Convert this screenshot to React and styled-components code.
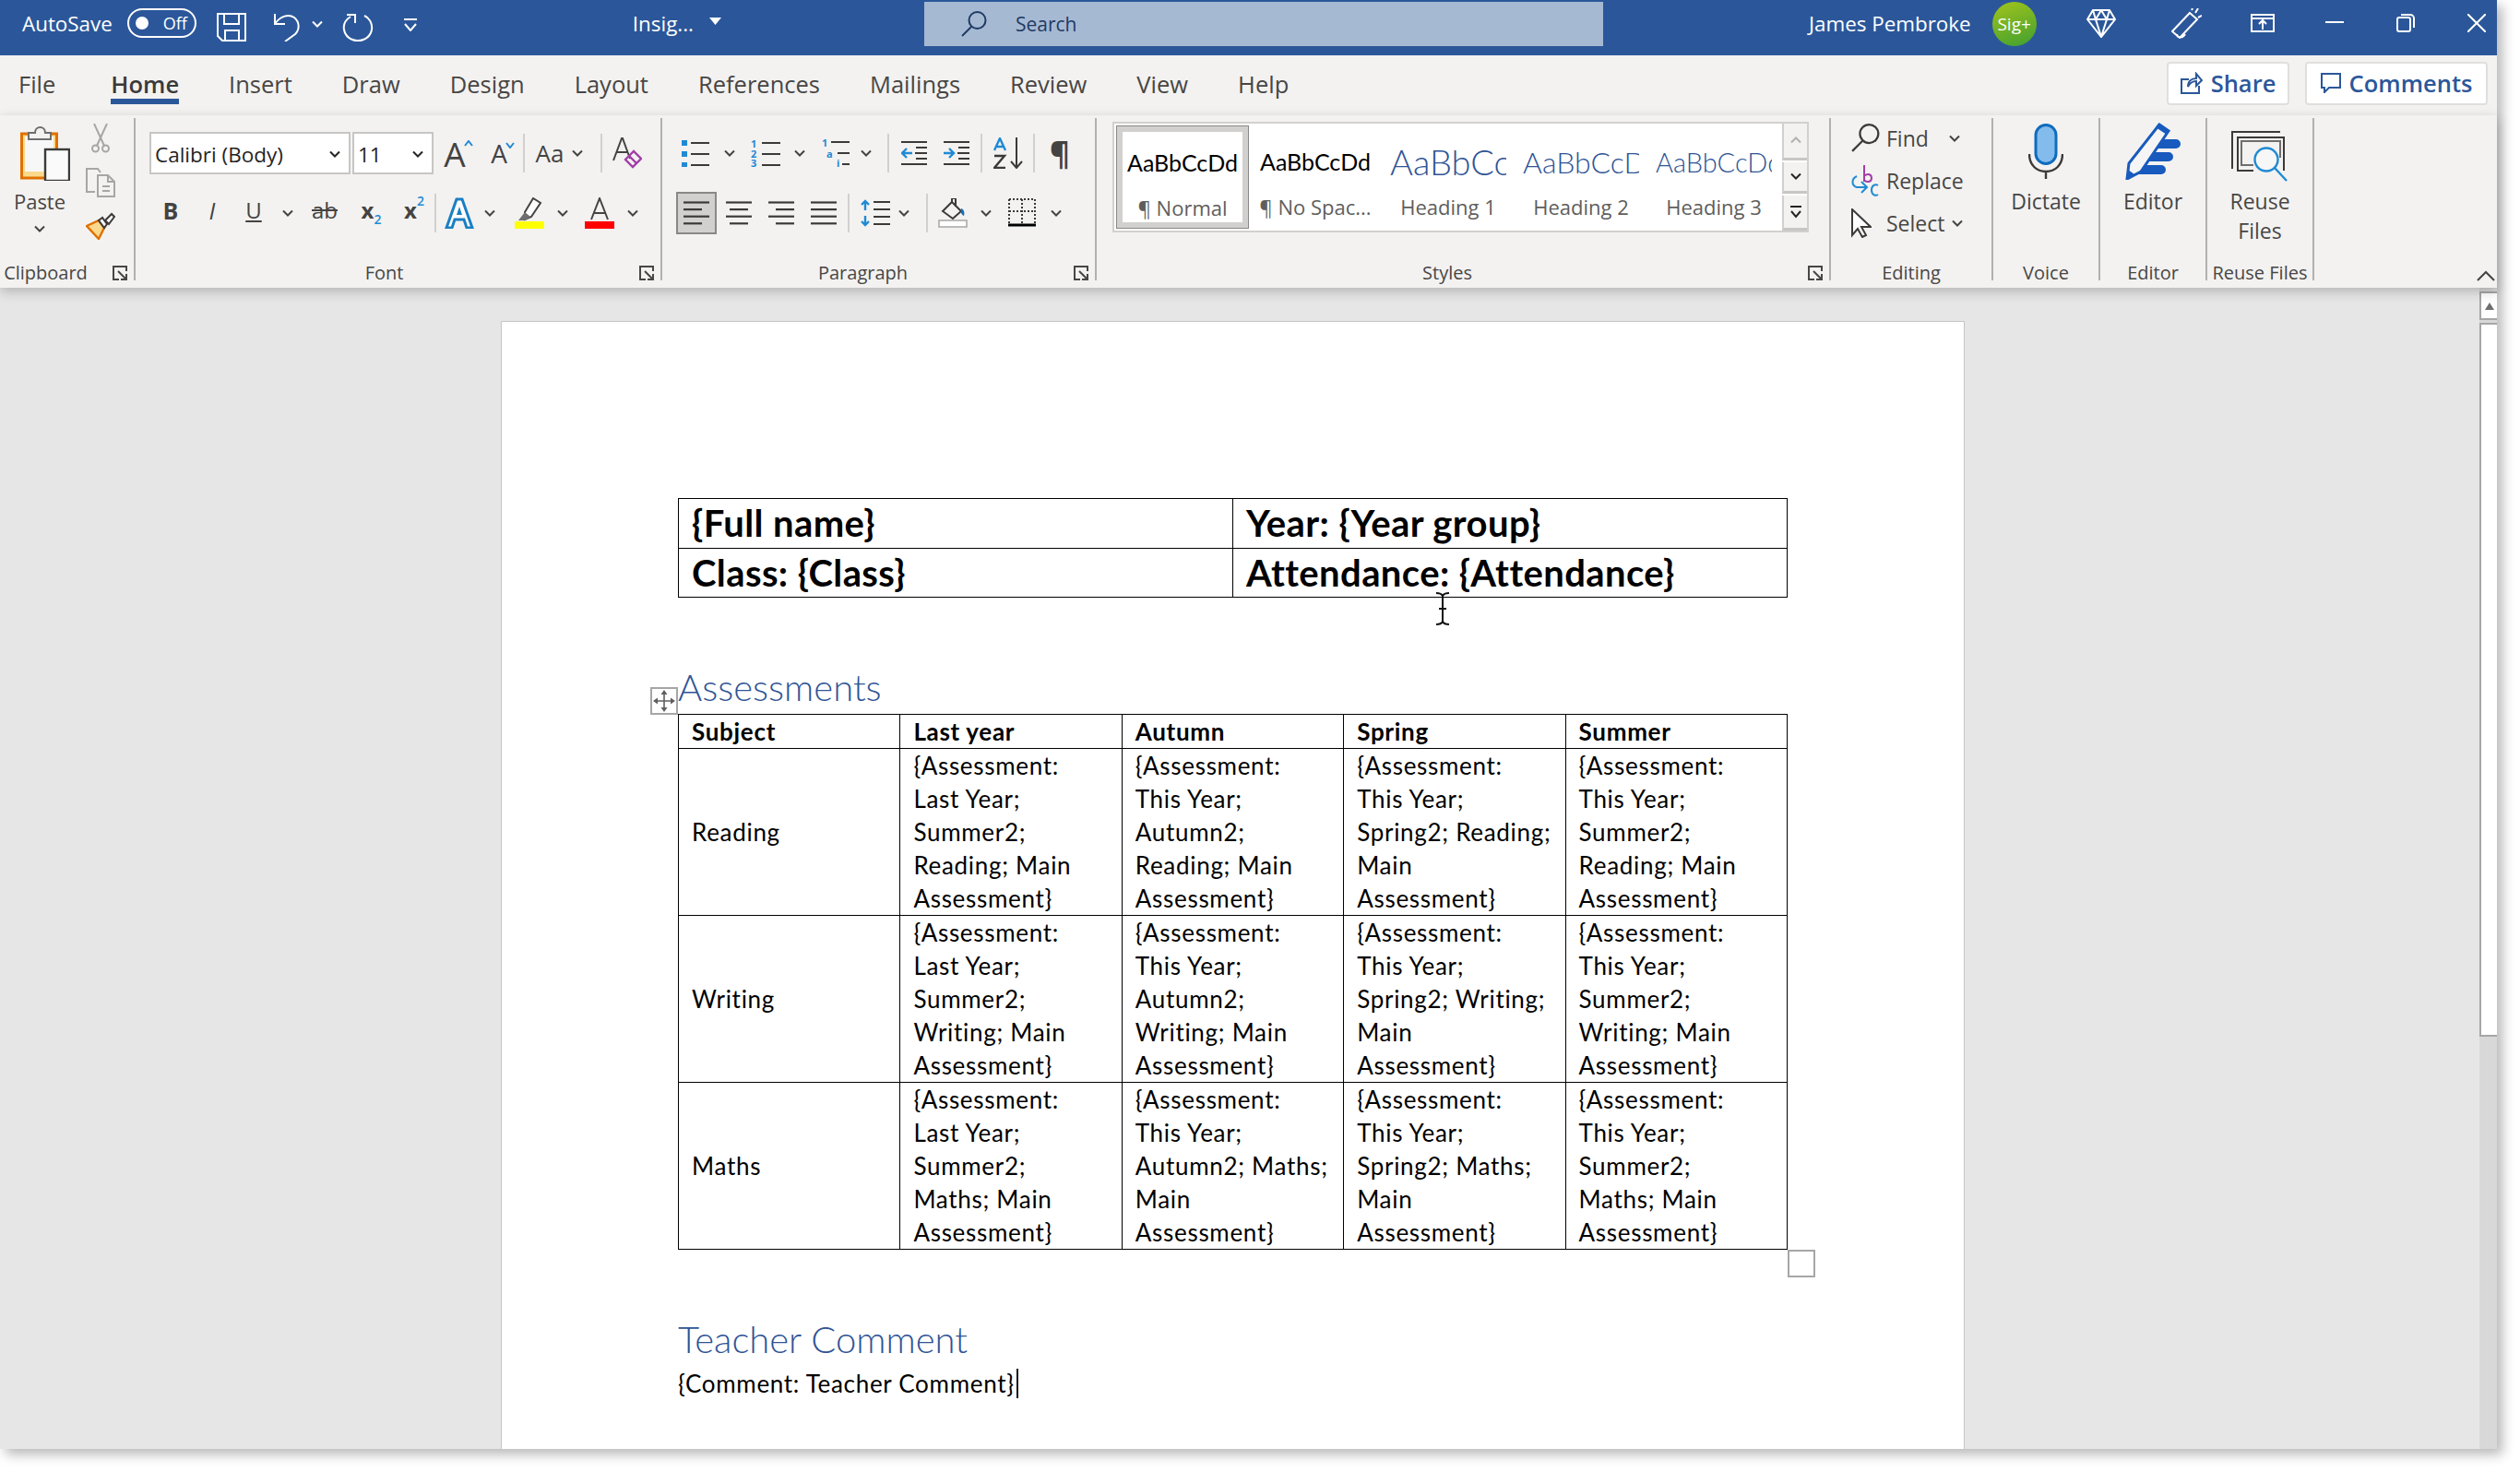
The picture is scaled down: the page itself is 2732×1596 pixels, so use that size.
import React from 'react';
import styled, { createGlobalStyle } from 'styled-components';

const UI = '"Open Sans", "Noto Sans", sans-serif';
const DOC = 'Lato, "Noto Sans", sans-serif';
const INK = '#444342';
const BLUE = '#1f8ad4';
const NAVY = '#2b579a';

const GlobalStyle = createGlobalStyle`
  html, body { margin: 0; padding: 0; background: #fff; }
  * { box-sizing: border-box; }
  body { width: 2732px; height: 1596px; overflow: hidden; font-family: ${UI}; }
`;

const Window = styled.div`
  width: 2707px;
  height: 1571px;
  display: flex;
  flex-direction: column;
  box-shadow: 6px 6px 12px rgba(0, 0, 0, 0.28);
`;

/* title bar */
const TitleBar = styled.header`
  height: 60px;
  flex: none;
  display: flex;
  align-items: center;
  background: ${NAVY};
  color: #fff;
  padding-left: 24px;
  font-size: 22.4px;
`;
const Toggle = styled.div`
  width: 75px;
  height: 32px;
  margin-left: 16px;
  margin-top: -10px;
  border: 2px solid #fff;
  border-radius: 16px;
  display: flex;
  align-items: center;
  padding-left: 7px;
  font-size: 18px;
  &::before {
    content: '';
    width: 14px;
    height: 14px;
    border-radius: 50%;
    background: #fff;
    margin-right: 16px;
  }
`;
const TitleText = styled.span`
  margin-left: ${(p) => p.$ml || 0}px;
  margin-top: -10px;
  white-space: nowrap;
`;
const SearchBox = styled.div`
  width: 736px;
  height: 48px;
  margin-left: ${(p) => p.$ml}px;
  margin-top: -8px;
  background: #a6b9d3;
  color: #1f3a63;
  display: flex;
  align-items: center;
  padding-left: 40px;
  gap: 31px;
  font-size: 21px;
`;
const Avatar = styled.div`
  width: 48px;
  height: 48px;
  margin-left: 23px;
  margin-top: -8px;
  border-radius: 50%;
  background: linear-gradient(160deg, #a3c41c, #3f9f30);
  font-size: 19px;
  display: flex;
  align-items: center;
  justify-content: center;
`;
const Cell = styled.div`
  flex: none;
  width: ${(p) => p.$w}px;
  height: ${(p) => p.$h || 46}px;
  margin-left: ${(p) => p.$ml || 0}px;
  margin-top: ${(p) => p.$mt || 0}px;
  display: flex;
  align-items: center;
  justify-content: center;
  color: ${INK};
`;

/* tabs */
const TabRow = styled.nav`
  height: 65px;
  flex: none;
  display: flex;
  align-items: center;
  background: #f3f2f1;
  padding-left: 20px;
`;
const Tab = styled.div`
  position: relative;
  margin-right: ${(p) => p.$mr}px;
  font-size: 25.5px;
  line-height: 34px;
  margin-top: -4px;
  color: ${(p) => (p.$active ? '#3b3a39' : '#484644')};
  font-weight: ${(p) => (p.$active ? 600 : 400)};
  ${(p) =>
    p.$active &&
    `&::after {
      content: '';
      position: absolute;
      left: 0;
      right: 0;
      bottom: -5px;
      height: 6px;
      background: ${NAVY};
    }`}
`;
const TabActions = styled.div`
  margin-left: auto;
  margin-right: 10px;
  margin-top: -5px;
  display: flex;
  gap: 17px;
`;
const ActionButton = styled.div`
  width: ${(p) => p.$w}px;
  height: 47px;
  display: flex;
  align-items: center;
  justify-content: center;
  gap: 9px;
  background: #fff;
  border: 2px solid #e1dfdd;
  border-radius: 4px;
  color: ${NAVY};
  font-size: 25.5px;
  font-weight: 600;
`;

/* ribbon */
const Ribbon = styled.section`
  height: 187px;
  flex: none;
  position: relative;
  z-index: 2;
  display: flex;
  padding-top: 3px;
  background: #f3f2f1;
  box-shadow: 0 4px 12px rgba(0, 0, 0, 0.22);
`;
const Group = styled.div`
  position: relative;
  flex: none;
  width: ${(p) => p.$w}px;
  height: 176px;
  border-right: 2px solid #b3b0ad;
  display: flex;
  flex-direction: column;
`;
const GroupBody = styled.div`
  flex: 1;
  min-height: 0;
  display: flex;
  flex-direction: ${(p) => p.$dir || 'row'};
  padding-left: ${(p) => p.$pl || 0}px;
  padding-top: ${(p) => p.$pt || 0}px;
  gap: ${(p) => p.$gap || 0}px;
`;
const GroupFoot = styled.div`
  height: 16px;
  flex: none;
  display: flex;
  justify-content: center;
  padding-right: ${(p) => p.$pr || 0}px;
  font-size: 20px;
  line-height: 16px;
  color: #484644;
  white-space: nowrap;
`;
const Launcher = styled.svg`
  position: absolute;
  right: 7px;
  bottom: 0;
`;
const ToolRow = styled.div`
  display: flex;
  align-items: center;
  height: 46px;
`;
const FontSelect = styled.div`
  flex: none;
  width: ${(p) => p.$w}px;
  height: 46px;
  margin-right: 2px;
  background: #fff;
  border: 2px solid #c8c6c4;
  display: flex;
  align-items: center;
  justify-content: space-between;
  padding: 2px 9px 0 4px;
  font-size: 22.5px;
  color: #252423;
`;
const RowSep = styled.span`
  width: 2px;
  height: 42px;
  background: #d2d0ce;
`;
const ActiveAlign = styled(Cell)`
  background: #d2d0ce;
  border: 2px solid #8a8886;
`;

const PasteColumn = styled.div`
  width: 86px;
  flex: none;
  display: flex;
  flex-direction: column;
  align-items: center;
  padding-top: 8px;
  font-size: 22px;
  color: #484644;
  line-height: 30px;
  & > span {
    margin-top: 7px;
    margin-bottom: 11px;
  }
  & > svg:first-child {
    margin-left: 12px;
  }
`;
const SmallTools = styled.div`
  display: flex;
  flex-direction: column;
  align-items: center;
  gap: 16px;
  padding-top: 6px;
  width: 45px;
`;

const Gallery = styled.div`
  width: 755px;
  height: 120px;
  margin-left: 17px;
  margin-top: 4px;
  display: flex;
  background: #fff;
  border: 2px solid #d2d0ce;
`;
const StyleItem = styled.div`
  flex: none;
  width: 144px;
  height: 112px;
  margin-top: 2px;
  margin-left: ${(p) => (p.$selected ? 2 : 0)}px;
  overflow: hidden;
  display: flex;
  flex-direction: column;
  align-items: center;
  background: #fff;
  ${(p) => p.$selected && 'border: 1px solid #8a8886; outline: 0; box-shadow: inset 0 0 0 6px #d2d0ce;'}
`;
const StyleSample = styled.div`
  height: 73px;
  width: 126px;
  padding-top: 5px;
  display: flex;
  align-items: center;
  justify-content: ${(p) => (p.$clip ? 'flex-start' : 'center')};
  overflow: hidden;
  white-space: nowrap;
  font-family: ${DOC};
  font-size: ${(p) => p.$size}px;
  font-weight: ${(p) => (p.$clip ? 300 : 400)};
  color: ${(p) => (p.$clip ? '#2f5496' : '#000')};
`;
const StyleName = styled.div`
  font-size: 22px;
  line-height: 30px;
  color: #605e5c;
  white-space: nowrap;
`;
const GalleryScroll = styled.div`
  margin-left: auto;
  width: 27px;
  display: flex;
  flex-direction: column;
  gap: 2px;
`;
const ScrollStep = styled.div`
  flex: ${(p) => p.$grow};
  display: flex;
  align-items: center;
  justify-content: center;
  background: #f3f2f1;
  border-left: 2px solid #d2d0ce;
  border-bottom: 3px solid #c8c6c4;
`;
const EditRow = styled.div`
  height: 46px;
  padding-bottom: 3px;
  display: flex;
  align-items: center;
  font-size: 23px;
  color: #484644;
`;
const EditIcon = styled.div`
  width: 38px;
  flex: none;
  display: flex;
  justify-content: flex-start;
`;
const BigButton = styled.div`
  flex: 1;
  display: flex;
  flex-direction: column;
  align-items: center;
  padding-top: ${(p) => p.$pt}px;
  font-size: 23px;
  line-height: 32px;
  color: #484644;
  text-align: center;
`;
const BigIcon = styled.div`
  height: ${(p) => p.$h}px;
  flex: none;
`;
const Collapse = styled.svg`
  position: absolute;
  right: 2px;
  bottom: 7px;
`;

/* document */
const DocArea = styled.main`
  flex: 1;
  min-height: 0;
  display: flex;
  overflow: hidden;
`;
const Canvas = styled.div`
  flex: 1;
  background: #e6e6e6;
  padding: 36px 0 0 543px;
  overflow: hidden;
`;
const Page = styled.article`
  position: relative;
  width: 1587px;
  height: 1300px;
  padding: 191px 0 0 191px;
  background: #fff;
  border: 1px solid #c8c6c4;
  color: #000;
  font-family: ${DOC};
`;
const InfoTable = styled.table`
  width: 1203px;
  table-layout: fixed;
  border-collapse: collapse;
  font-size: 40px;
  letter-spacing: 0.4px;
  font-weight: 700;
  td {
    height: 53.5px;
    padding: 0 14px;
    border: 1px solid #000;
    line-height: 50px;
  }
`;
const Heading = styled.h2`
  margin: ${(p) => p.$mt}px 0 0;
  height: 50px;
  font-size: 40px;
  line-height: 42px;
  font-weight: 300;
  white-space: nowrap;
  color: #2f5496;
`;
const Assessments = styled.table`
  width: 1203px;
  table-layout: fixed;
  border-collapse: collapse;
  font-size: 26px;
  letter-spacing: 0.7px;
  line-height: 36px;
  td, th {
    padding: 0 14px;
    border: 1px solid #000;
    text-align: left;
    vertical-align: middle;
    white-space: nowrap;
  }
`;
const MoveHandle = styled.div`
  position: absolute;
  left: 161px;
  top: 396px;
  width: 30px;
  height: 30px;
  border: 2px solid #a6a6a6;
  background: #fff;
  display: flex;
  align-items: center;
  justify-content: center;
`;
const ResizeHandle = styled.div`
  position: absolute;
  left: 1394px;
  top: 1006px;
  width: 30px;
  height: 30px;
  border: 2px solid #a6a6a6;
`;
const BeamCursor = styled.svg`
  position: absolute;
  left: 1011px;
  top: 293px;
`;
const CommentLine = styled.p`
  margin: 1px 0 0;
  font-size: 26px;
  letter-spacing: 0.7px;
  line-height: 36px;
  display: flex;
  align-items: center;
  &::after {
    content: '';
    width: 2px;
    height: 32px;
    margin-left: 2px;
    background: #111;
  }
`;
const ScrollBar = styled.aside`
  width: 19px;
  flex: none;
  background: #d8d8d8;
  display: flex;
  flex-direction: column;
  padding-top: 4px;
  gap: 3px;
`;
const ScrollUp = styled.div`
  height: 31px;
  flex: none;
  background: #fff;
  border: 2px solid #a6a6a6;
  border-right: 0;
  display: flex;
  align-items: center;
  justify-content: center;
`;
const ScrollThumb = styled.div`
  height: 774px;
  flex: none;
  background: #fff;
  border: 2px solid #a6a6a6;
  border-right: 0;
`;

/* drawings */
const Chev = ({ c = INK, w = 12 }) => (
  <svg width={w} height="8" viewBox="0 0 12 8" fill="none" stroke={c} strokeWidth="2"><path d="M1 1.5l5 5 5-5" /></svg>
);
const LauncherIcon = () => (
  <Launcher width="16" height="16" viewBox="0 0 16 16" fill="none" stroke="#484644" strokeWidth="2">
    <path d="M15 6V1H1v14h6M6 6l9 9M15 9v6H9" />
  </Launcher>
);
const Lines = ({ rows, w = 28, h = 26 }) => (
  <svg width={w} height={h} viewBox={`0 0 ${w} ${h}`} stroke="#3b3a39" strokeWidth="2.2">
    {rows.map((r, i) => <path key={i} d={`M${r[0]} ${1.5 + i * 7.6}H${r[1]}`} />)}
  </svg>
);
const Save = () => (
  <svg width="32" height="31" viewBox="0 0 32 31" fill="none" stroke="#fff" strokeWidth="2"><path d="M1 1h30v29H6l-5-5zM8 1v11h16V1M9 30V19h15v11" /></svg>
);
const Undo = () => (
  <svg width="30" height="32" viewBox="0 0 30 32" fill="none" stroke="#fff" strokeWidth="2"><path d="M2 2v11h11M2 13C8 4 17 2 23 6c6 5 6 13 1 18L13 32" /></svg>
);
const Redo = () => (
  <svg width="34" height="32" viewBox="0 0 34 32" fill="none" stroke="#fff" strokeWidth="2"><path d="M9 5C3 9 1 14 2 19c1 7 7 12 15 12s14-5 15-12c1-7-3-13-8-15M5 3h9v9" /></svg>
);
const Qat = () => (
  <svg width="14" height="14" viewBox="0 0 14 14" fill="none" stroke="#fff" strokeWidth="2"><path d="M0 1h14M1 6l6 7 6-7" /></svg>
);
const Lens = ({ s = 28, c = '#1f3a63', w = 2 }) => (
  <svg width={s} height={s} viewBox="0 0 28 28" fill="none" stroke={c} strokeWidth={w}><circle cx="17.5" cy="10" r="9" /><path d="M11 17L1 27" /></svg>
);
const Diamond = () => (
  <svg width="32" height="31" viewBox="0 0 32 31" fill="none" stroke="#fff" strokeWidth="2"><path d="M7 1h18l6 10-15 19L1 11zM1 11h30M10 11l6 19 6-19M7 1l3 10 6-10 6 10 3-10" /></svg>
);
const Megaphone = () => (
  <svg width="33" height="33" viewBox="0 0 33 33" fill="none" stroke="#fff" strokeWidth="2"><path d="M20 5l8 7L9 32l-8-7zM6 28c0 4 6 5 9 0M22 2l1-2M26 5l3-5M29 10l4-2" /></svg>
);
const RibbonDisplay = () => (
  <svg width="26" height="20" viewBox="0 0 26 20" fill="none" stroke="#fff" strokeWidth="2"><path d="M1 1h24v18H1zM1 5h24M13 17V8M9 11l4-4 4 4" /></svg>
);
const Minimize = () => (
  <svg width="20" height="2" viewBox="0 0 20 2"><path d="M0 1h20" stroke="#fff" strokeWidth="2" /></svg>
);
const Restore = () => (
  <svg width="20" height="20" viewBox="0 0 20 20" fill="none" stroke="#fff" strokeWidth="2"><rect x="1" y="4" width="14" height="15" rx="2" /><path d="M5 1h10a4 4 0 0 1 4 4v10" /></svg>
);
const CloseX = () => (
  <svg width="20" height="20" viewBox="0 0 20 20" stroke="#fff" strokeWidth="2"><path d="M0 0l20 20M20 0L0 20" /></svg>
);
const ShareIcon = () => (
  <svg width="24" height="24" viewBox="0 0 24 24" fill="none" stroke={NAVY} strokeWidth="2"><path d="M9 8H1v15h19v-8M8 16c0-6 4-9 9-9V2l6 7-6 6v-5c-4 0-7 2-9 6z" /></svg>
);
const CommentIcon = () => (
  <svg width="22" height="22" viewBox="0 0 22 22" fill="none" stroke={NAVY} strokeWidth="2"><path d="M1 1h20v15H9l-5 5v-5H1z" /></svg>
);
const Paste = () => (
  <svg width="54" height="60" viewBox="0 0 54 60">
    <rect x="1.5" y="9" width="38" height="48" fill="#fbd98c" stroke="#e07000" strokeWidth="3" />
    <rect x="5" y="12" width="31" height="38" fill="#f7f7f7" />
    <path d="M9 15V8h7c0-8 11-8 11 0h6v7z" fill="#f3f2f1" stroke="#6e6e6e" strokeWidth="2" />
    <rect x="27" y="26" width="26" height="34" fill="#fafafa" stroke="#3b3a39" strokeWidth="2.4" />
  </svg>
);
const Cut = () => (
  <svg width="20" height="32" viewBox="0 0 20 32" fill="none" stroke="#a6a6a6" strokeWidth="2"><path d="M3 0l11 24M17 0L6 24" /><circle cx="4.5" cy="27" r="3.5" /><circle cx="15.5" cy="27" r="3.5" /></svg>
);
const Copy = () => (
  <svg width="32" height="32" viewBox="0 0 32 32" fill="none" stroke="#a6a6a6" strokeWidth="2"><path d="M10 26H1V1h12l3 4" /><path d="M13 8h11l7 7v16H13zM24 8v7h7M18 20h8M18 25h8" /></svg>
);
const Painter = () => (
  <svg width="32" height="30" viewBox="0 0 32 30">
    <path d="M1 15l13-6 6 8-6 12z" fill="#fbd98c" stroke="#e07000" strokeWidth="2.4" />
    <path d="M14 9l4-3 5 7-3 4z" fill="#f7f7f7" stroke="#3b3a39" strokeWidth="2" />
    <path d="M21 9l7-7 3 3-6 8z" fill="#f7f7f7" stroke="#3b3a39" strokeWidth="2" />
  </svg>
);
const Glyph = styled.span`
  font-size: ${(p) => p.$size}px;
  font-weight: ${(p) => p.$weight || 400};
  font-style: ${(p) => (p.$italic ? 'italic' : 'normal')};
  color: ${INK};
  line-height: 1;
  display: inline-block;
  position: relative;
  margin-left: ${(p) => p.$ml || 0}px;
  text-decoration: ${(p) => p.$decor || 'none'};
`;
const Script = styled.span`
  position: absolute;
  left: 100%;
  top: ${(p) => p.$top}px;
  font-size: 14px;
  line-height: 16px;
  font-weight: 600;
  color: ${BLUE};
`;
const Caret = styled.svg`
  position: absolute;
  left: 92%;
  top: ${(p) => p.$top}px;
`;
const CaretUp = () => (
  <Caret $top={4} width="10" height="7" viewBox="0 0 10 7" fill="none" stroke={BLUE} strokeWidth="2"><path d="M1 6l4-5 4 5" /></Caret>
);
const CaretDown = () => (
  <Caret $top={2} width="10" height="7" viewBox="0 0 10 7" fill="none" stroke={BLUE} strokeWidth="2"><path d="M1 1l4 5 4-5" /></Caret>
);
const Eraser = () => (
  <svg width="32" height="34" viewBox="0 0 32 34" fill="none">
    <path d="M1 25L10 1h1l8 22M5 16h11" stroke={INK} strokeWidth="2" />
    <path d="M14 24l9-9 8 8-9 9z" stroke="#a33ea8" strokeWidth="2.4" />
    <path d="M18 20l8 8" stroke="#a33ea8" strokeWidth="2.4" />
  </svg>
);
const TextEffect = () => (
  <svg width="32" height="34" viewBox="0 0 32 34" fill="none">
    <path d="M2 33L13 2h6l11 31h-6l-3-9H11l-3 9z" fill="#fff" stroke="#1a7fc4" strokeWidth="3" />
    <path d="M13 19l3-9 3 9z" fill="#1a7fc4" />
  </svg>
);
const Highlighter = () => (
  <svg width="32" height="34" viewBox="0 0 32 34" fill="none">
    <path d="M11 16L20 1l8 5-10 15-7 3z" fill="#fff" stroke={INK} strokeWidth="2" />
    <path d="M4 25l7-9 6 5-5 4z" fill="#6e6e6e" />
    <rect x="0" y="26" width="32" height="8" fill="#ffff00" />
  </svg>
);
const FontColor = () => (
  <svg width="32" height="34" viewBox="0 0 32 34" fill="none">
    <path d="M7 24L16 1l9 23M10 17h12" stroke={INK} strokeWidth="2" />
    <rect x="0" y="26" width="32" height="8" fill="#f00" />
  </svg>
);
const Bullets = () => (
  <svg width="30" height="30" viewBox="0 0 30 30">
    {[0, 12, 24].map((y) => <rect key={y} y={y + 1} width="6" height="6" fill={BLUE} />)}
    {[0, 12, 24].map((y) => <path key={y} d={`M10 ${y + 4}h20`} stroke="#3b3a39" strokeWidth="2" />)}
  </svg>
);
const NumberIcon = styled.svg`
  overflow: visible;
`;
const SmallNo = styled.text`
  font-family: ${UI};
  font-size: 11px;
  font-weight: 700;
  fill: ${BLUE};
`;
const Numbered = () => (
  <NumberIcon width="32" height="30" viewBox="0 0 32 30">
    <SmallNo x="0" y="9">1</SmallNo><SmallNo x="0" y="20">2</SmallNo><SmallNo x="0" y="30">3</SmallNo>
    {[0, 12, 24].map((y) => <path key={y} d={`M12 ${y + 4}h20`} stroke="#3b3a39" strokeWidth="2" />)}
  </NumberIcon>
);
const Multi = () => (
  <NumberIcon width="30" height="32" viewBox="0 0 30 32">
    <SmallNo x="0" y="9">1</SmallNo><SmallNo x="5" y="21">a</SmallNo><SmallNo x="16" y="31">i</SmallNo>
    <path d="M10 4h20M17 16h13M22 28h8" stroke="#3b3a39" strokeWidth="2" />
  </NumberIcon>
);
const Indent = ({ flip }) => (
  <svg width="28" height="28" viewBox="0 0 28 28" fill="none">
    <path d="M0 2h28M15 14h13M0 26h28M16 8h12M16 20h12" stroke="#3b3a39" strokeWidth="2" />
    <path d={flip ? 'M0 14h11M6 9l5 5-5 5' : 'M1 14h11M6 9l-5 5 5 5'} stroke={BLUE} strokeWidth="2.4" />
  </svg>
);
const Sort = () => (
  <svg width="32" height="34" viewBox="0 0 32 34" fill="none">
    <path d="M1 14L7 1l6 13M3 10h8" stroke={BLUE} strokeWidth="2.4" />
    <path d="M1 20h11L1 33h12" stroke="#3b3a39" strokeWidth="2.4" />
    <path d="M25 0v32M19 26l6 7 6-7" stroke="#3b3a39" strokeWidth="2" />
  </svg>
);
const LineSpacing = () => (
  <svg width="32" height="30" viewBox="0 0 32 30" fill="none">
    <path d="M5 2v10M1 6l4-4 4 4M5 18v10M1 24l4 4 4-4" stroke={BLUE} strokeWidth="2.4" />
    <path d="M14 3h18M14 11h18M14 19h18M14 27h18" stroke="#3b3a39" strokeWidth="2.2" />
  </svg>
);
const Shading = () => (
  <svg width="32" height="32" viewBox="0 0 32 32" fill="none">
    <path d="M5 14L15 4l10 10-9 8zM15 4V0h4v9" stroke="#3b3a39" strokeWidth="2" />
    <path d="M25 11c3 1 4 4 3 8-3-1-4-5-3-8z" fill="#1a6fb5" />
    <rect x="1" y="24" width="30" height="7" fill="#fff" stroke="#a6a6a6" strokeWidth="1.5" />
  </svg>
);
const Borders = () => (
  <svg width="30" height="32" viewBox="0 0 30 32" fill="none">
    <path d="M1 1h28v26M1 1v26M15 1v26M1 14h28" stroke="#3b3a39" strokeWidth="2" strokeDasharray="2 2" />
    <path d="M0 29h30" stroke="#000" strokeWidth="3" />
  </svg>
);
const Replace = () => (
  <svg width="30" height="34" viewBox="0 0 30 34" fill="none">
    <path d="M14 0v18M14 12c2-3 8-3 8 2s-6 5-8 2" stroke="#a33ea8" strokeWidth="2" />
    <path d="M6 12C0 15 0 22 6 24h10M11 18l6 6-6 6" stroke={BLUE} strokeWidth="2" />
    <path d="M29 22c-3-2-7 0-7 5s4 7 7 5" stroke={BLUE} strokeWidth="2" />
  </svg>
);
const Pointer = () => (
  <svg width="22" height="32" viewBox="0 0 22 32" fill="#fff" stroke="#3b3a39" strokeWidth="2"><path d="M1 1v28l6-7 5 9 4-2-5-9h10z" /></svg>
);
const Mic = () => (
  <svg width="38" height="60" viewBox="0 0 38 60" fill="none">
    <rect x="8" y="1.5" width="22" height="42" rx="11" fill="#83bcec" stroke="#0f6cbd" strokeWidth="3" />
    <path d="M1 33c0 12 8 19 18 19s18-7 18-19M19 52v8" stroke="#3b3a39" strokeWidth="2.4" />
  </svg>
);
const EditorIcon = () => (
  <svg width="62" height="62" viewBox="0 0 62 62">
    <path d="M34 18h22a5 5 0 0 1 0 10H28zM26 32h22a5 5 0 0 1 0 10H20zM16 46h24a5 5 0 0 1 0 10H12z" fill="#185abd" />
    <path d="M38 2l10 7-30 44-15 8 2-17z" fill="#f5f5f5" stroke="#185abd" strokeWidth="3" />
    <path d="M37 1l12 8-3 4-12-8zM2 61l2-10 7 5z" fill="#185abd" />
  </svg>
);
const ReuseIcon = () => (
  <svg width="62" height="55" viewBox="0 0 62 55" fill="none">
    <path d="M1 41V1h52" stroke="#3b3a39" strokeWidth="2" />
    <path d="M24 43H7V7h50v36" stroke="#3b3a39" strokeWidth="2" />
    <path d="M24 37H11V11h42v18" stroke="#6e6e6e" strokeWidth="2" />
    <circle cx="38" cy="31" r="12.5" fill="#f7f7f7" stroke={BLUE} strokeWidth="2.4" />
    <path d="M47 40l13 14" stroke={BLUE} strokeWidth="2.4" />
  </svg>
);
const MoveIcon = () => (
  <svg width="24" height="24" viewBox="0 0 24 24" fill="#5f5f5f" stroke="#5f5f5f" strokeWidth="1.6"><path d="M12 2v20M2 12h20" fill="none" /><path d="M12 0l3.5 5h-7zM12 24l3.5-5h-7zM0 12l5-3.5v7zM24 12l-5-3.5v7z" stroke="none" /></svg>
);

const TABS = ['File', 'Home', 'Insert', 'Draw', 'Design', 'Layout', 'References', 'Mailings', 'Review', 'View', 'Help'];
const STYLES = [
  { text: 'AaBbCcDd', name: '¶ Normal', size: 25, selected: true },
  { text: 'AaBbCcDd', name: '¶ No Spac...', size: 25 },
  { text: 'AaBbCcDd', name: 'Heading 1', size: 38, clip: true },
  { text: 'AaBbCcDd', name: 'Heading 2', size: 32, clip: true },
  { text: 'AaBbCcDd', name: 'Heading 3', size: 29, clip: true },
];
const lastYear = (s) => ['{Assessment:', 'Last Year;', 'Summer2;', `${s}; Main`, 'Assessment}'];
const autumn = (s) =>
  s === 'Maths'
    ? ['{Assessment:', 'This Year;', 'Autumn2; Maths;', 'Main', 'Assessment}']
    : ['{Assessment:', 'This Year;', 'Autumn2;', `${s}; Main`, 'Assessment}'];
const spring = (s) => ['{Assessment:', 'This Year;', `Spring2; ${s};`, 'Main', 'Assessment}'];
const summer = (s) => ['{Assessment:', 'This Year;', 'Summer2;', `${s}; Main`, 'Assessment}'];
const SUBJECTS = ['Reading', 'Writing', 'Maths'];

const Multiline = ({ lines }) => lines.map((l, i) => <React.Fragment key={i}>{l}{i < lines.length - 1 && <br />}</React.Fragment>);

export default function App() {
  return (
    <>
      <GlobalStyle />
      <Window>
        <TitleBar>
          <TitleText>AutoSave</TitleText>
          <Toggle>Off</Toggle>
          <Cell $w={32} $ml={22} $mt={-2}><Save /></Cell>
          <Cell $w={30} $ml={29} $mt={-2}><Undo /></Cell>
          <Cell $w={12} $ml={12} $mt={-8}><Chev c="#fff" /></Cell>
          <Cell $w={34} $ml={21} $mt={-2}><Redo /></Cell>
          <Cell $w={14} $ml={33} $mt={-6}><Qat /></Cell>
          <TitleText $ml={234}>Insig...</TitleText>
          <Cell $w={13} $ml={17} $mt={-14}><svg width="13" height="8" viewBox="0 0 13 8" fill="#fff"><path d="M0 0h13L6.5 8z" /></svg></Cell>
          <SearchBox $ml={220}><Lens />Search</SearchBox>
          <TitleText $ml={223}>James Pembroke</TitleText>
          <Avatar>Sig+</Avatar>
          <Cell $w={32} $ml={54} $mt={-10}><Diamond /></Cell>
          <Cell $w={33} $ml={60} $mt={-10}><Megaphone /></Cell>
          <Cell $w={26} $ml={53} $mt={-10}><RibbonDisplay /></Cell>
          <Cell $w={20} $ml={55} $mt={-12}><Minimize /></Cell>
          <Cell $w={20} $ml={57} $mt={-10}><Restore /></Cell>
          <Cell $w={20} $ml={57} $mt={-10}><CloseX /></Cell>
        </TitleBar>

        <TabRow>
          {TABS.map((t) => <Tab key={t} $active={t === 'Home'} $mr={t === 'File' ? 60 : 54}>{t}</Tab>)}
          <TabActions>
            <ActionButton $w={133}><ShareIcon />Share</ActionButton>
            <ActionButton $w={198}><CommentIcon />Comments</ActionButton>
          </TabActions>
        </TabRow>

        <Ribbon>
          <Group $w={147}>
            <GroupBody>
              <PasteColumn>
                <Paste />
                <span>Paste</span>
                <Chev />
              </PasteColumn>
              <SmallTools>
                <Cut />
                <Copy />
                <Painter />
              </SmallTools>
            </GroupBody>
            <GroupFoot $pr={46}>Clipboard</GroupFoot>
            <LauncherIcon />
          </Group>

          <Group $w={571}>
            <GroupBody $dir="column" $pl={15} $pt={15} $gap={19}>
              <ToolRow>
                <FontSelect $w={218}>Calibri (Body)<Chev c="#252423" /></FontSelect>
                <FontSelect $w={88}>11<Chev c="#252423" /></FontSelect>
                <Cell $w={30} $ml={8}><Glyph $size={37} $ml={-4}>A<CaretUp /></Glyph></Cell>
                <Cell $w={26} $ml={20}><Glyph $size={28} $ml={-4}>A<CaretDown /></Glyph></Cell>
                <Cell $w={24}><RowSep /></Cell>
                <Cell $w={32}><Glyph $size={26}>Aa</Glyph></Cell>
                <Cell $w={28}><Chev /></Cell>
                <Cell $w={24}><RowSep /></Cell>
                <Cell $w={32}><Eraser /></Cell>
              </ToolRow>
              <ToolRow>
                <Cell $w={46} $mt={-6}><Glyph $size={25} $weight={700}>B</Glyph></Cell>
                <Cell $w={44} $mt={-6}><Glyph $size={25} $italic>I</Glyph></Cell>
                <Cell $w={46} $mt={-6}><Glyph $size={24} $decor="underline">U</Glyph></Cell>
                <Cell $w={28}><Chev /></Cell>
                <Cell $w={52} $mt={-6}><Glyph $size={24} $decor="line-through">ab</Glyph></Cell>
                <Cell $w={47} $mt={-6}><Glyph $size={24} $weight={700} $ml={-6}>x<Script $top={14}>2</Script></Glyph></Cell>
                <Cell $w={46} $mt={-6}><Glyph $size={24} $weight={700} $ml={-6}>x<Script $top={-6}>2</Script></Glyph></Cell>
                <RowSep />
                <Cell $w={50}><TextEffect /></Cell>
                <Cell $w={16}><Chev /></Cell>
                <Cell $w={32} $ml={19}><Highlighter /></Cell>
                <Cell $w={16} $ml={12}><Chev /></Cell>
                <Cell $w={32} $ml={16}><FontColor /></Cell>
                <Cell $w={16} $ml={12}><Chev /></Cell>
              </ToolRow>
            </GroupBody>
            <GroupFoot $pr={30}>Font</GroupFoot>
            <LauncherIcon />
          </Group>

          <Group $w={471}>
            <GroupBody $dir="column" $pl={16} $pt={15} $gap={19}>
              <ToolRow>
                <Cell $w={40}><Bullets /></Cell>
                <Cell $w={34}><Chev /></Cell>
                <Cell $w={43}><Numbered /></Cell>
                <Cell $w={32}><Chev /></Cell>
                <Cell $w={46}><Multi /></Cell>
                <Cell $w={19}><Chev /></Cell>
                <Cell $w={29}><RowSep /></Cell>
                <Cell $w={28}><Indent /></Cell>
                <Cell $w={28} $ml={18}><Indent flip /></Cell>
                <Cell $w={26}><RowSep /></Cell>
                <Cell $w={32}><Sort /></Cell>
                <Cell $w={24}><RowSep /></Cell>
                <Cell $w={32}><Glyph $size={34} $weight={700}>¶</Glyph></Cell>
              </ToolRow>
              <ToolRow>
                <ActiveAlign $w={44} $ml={-1}><Lines rows={[[0, 28], [0, 20], [0, 28], [0, 20]]} /></ActiveAlign>
                <Cell $w={28} $ml={10}><Lines rows={[[0, 28], [4, 24], [0, 28], [4, 24]]} /></Cell>
                <Cell $w={28} $ml={18}><Lines rows={[[0, 28], [8, 28], [0, 28], [8, 28]]} /></Cell>
                <Cell $w={28} $ml={18}><Lines rows={[[0, 28], [0, 28], [0, 28], [0, 28]]} /></Cell>
                <Cell $w={26}><RowSep /></Cell>
                <Cell $w={32}><LineSpacing /></Cell>
                <Cell $w={30}><Chev /></Cell>
                <Cell $w={20}><RowSep /></Cell>
                <Cell $w={32} $ml={2}><Shading /></Cell>
                <Cell $w={40}><Chev /></Cell>
                <Cell $w={30} $ml={4}><Borders /></Cell>
                <Cell $w={44}><Chev /></Cell>
              </ToolRow>
            </GroupBody>
            <GroupFoot $pr={34}>Paragraph</GroupFoot>
            <LauncherIcon />
          </Group>

          <Group $w={796}>
            <GroupBody>
              <Gallery>
                {STYLES.map((s) => (
                  <StyleItem key={s.name} $selected={s.selected}>
                    <StyleSample $size={s.size} $clip={s.clip}>{s.text}</StyleSample>
                    <StyleName>{s.name}</StyleName>
                  </StyleItem>
                ))}
                <GalleryScroll>
                  <ScrollStep $grow={40}><svg width="12" height="8" viewBox="0 0 12 8" fill="none" stroke="#b3b0ad" strokeWidth="2"><path d="M1 6.5l5-5 5 5" /></svg></ScrollStep>
                  <ScrollStep $grow={34}><Chev c="#252423" /></ScrollStep>
                  <ScrollStep $grow={38}><svg width="14" height="14" viewBox="0 0 14 14" fill="none" stroke="#252423" strokeWidth="2"><path d="M1 1h12M2 6l5 6 5-6" /></svg></ScrollStep>
                </GalleryScroll>
              </Gallery>
            </GroupBody>
            <GroupFoot $pr={34}>Styles</GroupFoot>
            <LauncherIcon />
          </Group>

          <Group $w={176}>
            <GroupBody $dir="column" $pl={22}>
              <EditRow><EditIcon><Lens s={31} c="#3b3a39" /></EditIcon>Find<Cell $w={12} $ml={22}><Chev /></Cell></EditRow>
              <EditRow><EditIcon><Replace /></EditIcon>Replace</EditRow>
              <EditRow><EditIcon><Pointer /></EditIcon>Select<Cell $w={12} $ml={8}><Chev /></Cell></EditRow>
            </GroupBody>
            <GroupFoot>Editing</GroupFoot>
          </Group>

          <Group $w={116}>
            <BigButton $pt={6}><BigIcon $h={68}><Mic /></BigIcon>Dictate</BigButton>
            <GroupFoot>Voice</GroupFoot>
          </Group>
          <Group $w={116}>
            <BigButton $pt={5}><BigIcon $h={69}><EditorIcon /></BigIcon>Editor</BigButton>
            <GroupFoot>Editor</GroupFoot>
          </Group>
          <Group $w={116}>
            <BigButton $pt={14}><BigIcon $h={60}><ReuseIcon /></BigIcon>Reuse<br />Files</BigButton>
            <GroupFoot>Reuse Files</GroupFoot>
          </Group>

          <Collapse width="20" height="12" viewBox="0 0 20 12" fill="none" stroke="#444342" strokeWidth="2"><path d="M1 11l9-9 9 9" /></Collapse>
        </Ribbon>

        <DocArea>
          <Canvas>
            <Page>
              <InfoTable>
                <tbody>
                  <tr><td>{'{Full name}'}</td><td>{'Year: {Year group}'}</td></tr>
                  <tr><td>{'Class: {Class}'}</td><td>{'Attendance: {Attendance}'}</td></tr>
                </tbody>
              </InfoTable>
              <BeamCursor width="18" height="36" viewBox="0 0 18 36" fill="none" stroke="#111" strokeWidth="2"><path d="M2 1c3 0 6 1 7 3 1-2 4-3 7-3M9 4v28M2 35c3 0 6-1 7-3 1 2 4 3 7 3M5 18h8" /></BeamCursor>
              <Heading $mt={76}>Assessments</Heading>
              <MoveHandle><MoveIcon /></MoveHandle>
              <Assessments>
                <thead>
                  <tr>{['Subject', 'Last year', 'Autumn', 'Spring', 'Summer'].map((h) => <th key={h}>{h}</th>)}</tr>
                </thead>
                <tbody>
                  {SUBJECTS.map((s) => (
                    <tr key={s}>
                      <td>{s}</td>
                      <td><Multiline lines={lastYear(s)} /></td>
                      <td><Multiline lines={autumn(s)} /></td>
                      <td><Multiline lines={spring(s)} /></td>
                      <td><Multiline lines={summer(s)} /></td>
                    </tr>
                  ))}
                </tbody>
              </Assessments>
              <ResizeHandle />
              <Heading $mt={76}>Teacher Comment</Heading>
              <CommentLine>{'{Comment: Teacher Comment}'}</CommentLine>
            </Page>
          </Canvas>
          <ScrollBar>
            <ScrollUp><svg width="10" height="8" viewBox="0 0 10 8" fill="#6e6e6e"><path d="M5 0l5 8H0z" /></svg></ScrollUp>
            <ScrollThumb />
          </ScrollBar>
        </DocArea>
      </Window>
    </>
  );
}
